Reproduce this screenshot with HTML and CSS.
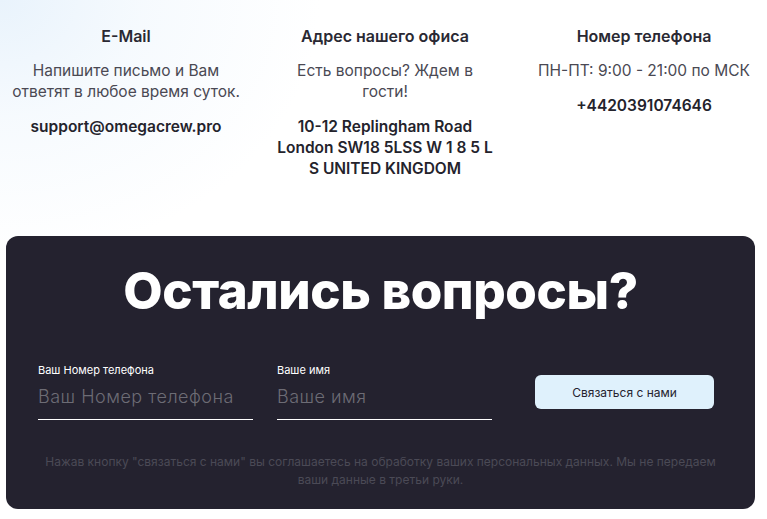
FILE: index.html
```html
<!DOCTYPE html>
<html lang="ru">
<head>
<meta charset="utf-8">
<title>Контакты</title>
<link rel="stylesheet" href="styles.css">
</head>
<body>
<section class="contacts">
  <div class="col">
    <h3 class="col-title">E-Mail</h3>
    <p class="col-text">Напишите письмо и Вам ответят в любое время суток.</p>
    <p class="col-strong">support@omegacrew.pro</p>
  </div>
  <div class="col col-mid">
    <h3 class="col-title">Адрес нашего офиса</h3>
    <p class="col-text">Есть вопросы? Ждем в гости!</p>
    <p class="col-strong">10-12 Replingham Road London SW18 5LSS W 1 8 5 L S UNITED KINGDOM</p>
  </div>
  <div class="col">
    <h3 class="col-title">Номер телефона</h3>
    <p class="col-text">ПН-ПТ: 9:00 - 21:00 по МСК</p>
    <p class="col-strong">+4420391074646</p>
  </div>
</section>

<section class="card">
  <h2 class="card-title">Остались вопросы?</h2>
  <form class="form">
    <label class="field">
      <span class="field-label">Ваш Номер телефона</span>
      <input class="field-input" type="text" placeholder="Ваш Номер телефона">
    </label>
    <label class="field">
      <span class="field-label">Ваше имя</span>
      <input class="field-input" type="text" placeholder="Ваше имя">
    </label>
    <button class="btn" type="button">Связаться с нами</button>
  </form>
  <p class="note">Нажав кнопку "связаться с нами" вы соглашаетесь на обработку ваших персональных данных. Мы не передаем ваши данные в третьи руки.</p>
</section>
</body>
</html>
```

FILE: styles.css
```css
html, body {
  margin: 0;
  padding: 0;
}
body {
  width: 767px;
  height: 519px;
  overflow: hidden;
  font-family: Inter, "Liberation Sans", sans-serif;
  color: #2b2a33;
  background:
    radial-gradient(ellipse 320px 260px at 0 0, #e9f3fc 0%, rgba(240,247,253,0.6) 45%, rgba(255,255,255,0) 100%),
    #ffffff;
}

.contacts {
  display: grid;
  grid-template-columns: 230px 230px 230px;
  column-gap: 29px;
  height: 180px;
  box-sizing: border-box;
  padding: 26px 0 0 11px;
  text-align: center;
}
.col {
  display: flex;
  flex-direction: column;
  align-items: center;
  gap: 14px;
}
.col-mid .col-text {
  max-width: 215px;
}
.col-mid .col-strong {
  max-width: 223px;
}
.col-title {
  margin: 0;
  font-size: 16px;
  line-height: 20px;
  font-weight: 600;
  color: #2a2933;
}
.col-text {
  margin: 0;
  font-size: 15.5px;
  line-height: 21px;
  font-weight: 400;
  color: #4a4953;
}
.col-strong {
  margin: 0;
  font-size: 15.5px;
  line-height: 21px;
  font-weight: 600;
  color: #24232c;
}

.card {
  margin: 56px 12px 0 6px;
  height: 273px;
  box-sizing: border-box;
  padding: 24px 32px 0 32px;
  background: #24222f;
  border-radius: 12px;
  color: #ffffff;
}
.card-title {
  margin: 0;
  text-align: center;
  font-size: 51px;
  line-height: 62px;
  font-weight: 800;
  letter-spacing: -0.4px;
  color: #ffffff;
}
.form {
  display: flex;
  align-items: center;
  margin-top: 42px;
}
.field {
  display: flex;
  flex-direction: column;
  width: 215px;
}
.field + .field {
  margin-left: 24px;
}
.field-label {
  font-size: 11px;
  line-height: 12px;
  color: #ffffff;
}
.field-input {
  margin-top: 9px;
  padding: 0 0 10px 0;
  border: 0;
  border-bottom: 1.5px solid #ffffff;
  background: transparent;
  font-family: inherit;
  font-size: 18px;
  line-height: 24px;
  font-weight: 300;
  letter-spacing: 0.5px;
  color: #ffffff;
  outline: none;
}
.field-input::placeholder {
  color: #6d6c75;
}
.btn {
  margin-left: 43px;
  width: 179px;
  height: 34px;
  border: 0;
  border-radius: 6px;
  background: #dff1fc;
  font-family: inherit;
  font-size: 12px;
  color: #24222f;
  cursor: pointer;
}
.note {
  margin: 33px 0 0 0;
  text-align: center;
  font-size: 12px;
  line-height: 18px;
  color: #4b4a56;
}
```
